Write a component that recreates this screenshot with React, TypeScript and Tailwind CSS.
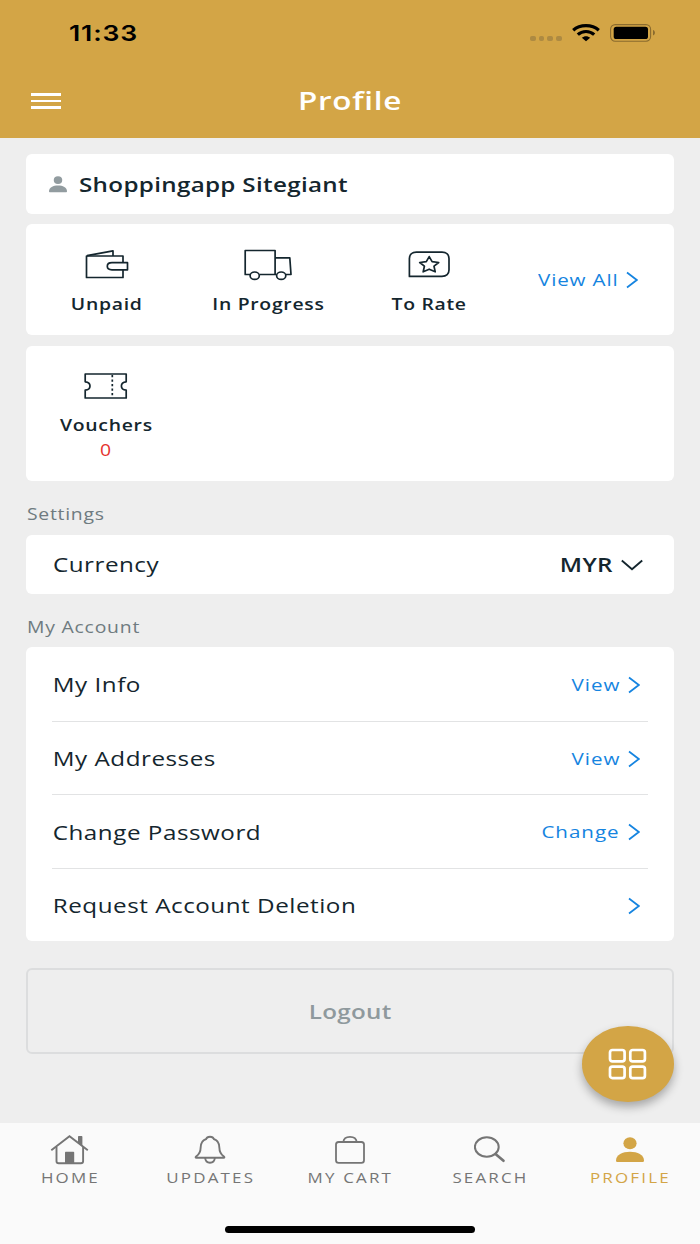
import type { ReactNode } from "react";

function Wide({ className = "", children }: { className?: string; children: ReactNode }) {
  return (
    <span className={`inline-block scale-x-[1.21] whitespace-nowrap ${className}`}>
      {children}
    </span>
  );
}

function WifiIcon() {
  return (
    <svg width="28" height="18" viewBox="0 0 28 18" fill="none" stroke="#000" strokeWidth="3.200">
      <path d="M1.200 6.200C8 .2 20 .2 26.800 6.200" />
      <path d="M5.800 10.700c4.600-4.300 11.800-4.300 16.400 0" />
      <path d="M14 17.300l-4.200-3.500c2.400-2.200 6-2.200 8.400 0z" fill="#000" stroke="none" />
    </svg>
  );
}

function BatteryIcon() {
  return (
    <svg width="45" height="18" viewBox="0 0 45 18">
      <rect x=".6" y=".6" width="40" height="16.600" rx="4.600" fill="none" stroke="#8a6b2e" strokeWidth="1.100" />
      <rect x="3.700" y="2.700" width="34.300" height="12.400" rx="2.600" fill="#000" />
      <path d="M43 6v5.400c1.100-.3 1.900-1.400 1.900-2.700S44.100 6.300 43 6z" fill="#8a6b2e" />
    </svg>
  );
}

function UserIcon({ className }: { className: string }) {
  return (
    <svg className={className} viewBox="0 0 28 26" preserveAspectRatio="none" fill="currentColor">
      <ellipse cx="14" cy="6.300" rx="6.600" ry="6" />
      <path d="M0 23.500C0 17.600 6.500 14.700 14 14.700s14 2.900 14 8.800c0 1-.7 1.500-1.700 1.500H1.700C.7 25 0 24.500 0 23.500z" />
    </svg>
  );
}

function WalletIcon() {
  return (
    <svg width="44" height="30" viewBox="0 0 44 30" fill="none" stroke="currentColor" strokeWidth="1.700" strokeLinejoin="round">
      <path d="M38 12.500V6H1.500v21.500H38V20" />
      <path d="M2 5.700L28 .9V6" />
      <path d="M42.500 12.700v7.100H27c-2.800 0-4.700-1.500-4.700-3.500s1.900-3.600 4.700-3.600z" />
    </svg>
  );
}

function TruckIcon() {
  return (
    <svg width="48" height="32" viewBox="0 0 48 32" fill="none" stroke="currentColor" strokeWidth="1.700" strokeLinejoin="round">
      <path d="M6 25.500H1.200V1.500h29.900v24H15.500M31.100 8.900h14.700L47 25.500h-5M31.100 25.500h1.300" />
      <ellipse cx="10.700" cy="26.700" rx="4.600" ry="3.700" />
      <ellipse cx="37.200" cy="26.700" rx="4.600" ry="3.700" />
    </svg>
  );
}

function RateIcon() {
  return (
    <svg width="42" height="28" viewBox="0 0 42 28" fill="none" stroke="currentColor" strokeWidth="1.700" strokeLinejoin="round">
      <path d="M1.400 25.400V7.500c0-3.700 2.600-6.300 7-6.300H34c4.400 0 7 2.600 7 6.300v11.600c0 3.700-2.600 6.300-7 6.300z" />
      <path d="M21.200 5.600l2.900 5 6.600.9-4.700 3.700 1.200 5.600-6-2.600-6 2.600 1.200-5.600-4.700-3.700 6.600-.9z" />
    </svg>
  );
}

function VoucherIcon() {
  return (
    <svg width="44" height="28" viewBox="0 0 44 28" fill="none" stroke="currentColor" strokeWidth="1.700" strokeLinejoin="round">
      <path d="M1.200 2h41v7.800c-3 .2-4.800 1.900-4.800 4.200s1.800 4 4.800 4.200V26h-41v-7.800c3-.2 4.800-1.900 4.800-4.200s-1.800-4-4.800-4.200z" />
      <path d="M28.300 3v22" strokeDasharray="2.300 2.200" />
    </svg>
  );
}

function ChevronRight() {
  return (
    <svg width="12" height="18" viewBox="0 0 12 18" fill="none" stroke="currentColor" strokeWidth="1.700">
      <path d="M1 1.500L10.800 9 1 16.500" />
    </svg>
  );
}

function ChevronDown() {
  return (
    <svg width="22" height="12" viewBox="0 0 22 12" fill="none" stroke="currentColor" strokeWidth="1.900">
      <path d="M.8 1.600L11 10.200 21.200 1.600" />
    </svg>
  );
}

function HomeIcon() {
  return (
    <svg width="40" height="32" viewBox="0 0 40 32" fill="none" stroke="currentColor" strokeWidth="1.900">
      <path d="M1.300 16.200L19.500 2.300l18.300 13.900" />
      <path d="M6.500 13v14.300c0 1.300.8 2 2.200 2h22.200c1.400 0 2.200-.7 2.200-2V13" />
      <path d="M28 3c0-.6.400-1 1.100-1h2.200c.7 0 1.100.4 1.100 1v9.300L28 8.800z" fill="currentColor" stroke="none" />
      <path d="M15 18.700c0-.7.400-1 1.100-1h7c.7 0 1.100.3 1.100 1v10.400H15z" fill="currentColor" stroke="none" />
    </svg>
  );
}

function BellIcon() {
  return (
    <svg width="32" height="32" viewBox="0 0 32 32" fill="none" stroke="currentColor" strokeWidth="1.900" strokeLinejoin="round">
      <path d="M16 2.700c-2 0-3.400.8-3.800 2.300-4.300 1.400-5.600 4.900-5.600 8.900 0 4.700-2 6.700-4.500 8.600-.8.700-.6 1.200.3 1.200h27.200c.9 0 1.100-.5.300-1.200-2.500-1.900-4.500-3.900-4.500-8.600 0-4-1.300-7.500-5.600-8.900-.4-1.500-1.800-2.300-3.800-2.300z" />
      <path d="M11.200 24c.2 3 2 4.700 4.800 4.700s4.600-1.700 4.800-4.700" />
    </svg>
  );
}

function CartIcon() {
  return (
    <svg width="32" height="32" viewBox="0 0 32 32" fill="none" stroke="currentColor" strokeWidth="1.800">
      <rect x="2" y="8" width="28" height="20.800" rx="2.600" />
      <path d="M9.300 8c.3-3.200 2.900-5.200 6.700-5.200s6.400 2 6.700 5.200" />
    </svg>
  );
}

function SearchIcon() {
  return (
    <svg width="32" height="32" viewBox="0 0 32 32" fill="none" stroke="currentColor" strokeWidth="2">
      <ellipse cx="12.800" cy="13" rx="11.900" ry="9.700" />
      <path d="M21.500 20l8 6.700" strokeWidth="2.700" strokeLinecap="round" />
    </svg>
  );
}

const orders = [
  { label: "Unpaid", icon: <WalletIcon /> },
  { label: "In Progress", icon: <TruckIcon /> },
  { label: "To Rate", icon: <RateIcon /> },
];

const account = [
  { label: "My Info", action: "View" },
  { label: "My Addresses", action: "View" },
  { label: "Change Password", action: "Change" },
  { label: "Request Account Deletion", action: "" },
];

const tabs = [
  { label: "HOME", icon: <HomeIcon /> },
  { label: "UPDATES", icon: <BellIcon /> },
  { label: "MY CART", icon: <CartIcon /> },
  { label: "SEARCH", icon: <SearchIcon /> },
  { label: "PROFILE", icon: <UserIcon className="h-[26px] w-7" />, active: true },
];

export default function App() {
  return (
    <div className="relative flex h-[1244px] w-[700px] flex-col overflow-hidden bg-[#eeeeee] font-['Open_Sans',sans-serif] text-[#14262e]">
      <header className="h-[138px] shrink-0 bg-[#d3a546]">
        <div className="flex h-[65px] items-center justify-between pr-[45px] pl-[69px] text-black">
          <Wide className="mt-0.5 origin-left font-['Inter',sans-serif] text-[22px] font-semibold tracking-[0.700px]">
            11:33
          </Wide>
          <div className="flex items-center">
            <div className="mt-[11px] mr-[10px] flex gap-[3px]">
              {[0, 1, 2, 3].map((dot) => (
                <span key={dot} className="h-[5px] w-[5.800px] rounded-[2px] bg-[#ad8a42]" />
              ))}
            </div>
            <WifiIcon />
            <span className="w-[10px]" />
            <BatteryIcon />
          </div>
        </div>
        <div className="grid h-[72px] grid-cols-[1fr_auto_1fr] items-center px-[31px]">
          <div className="flex w-[30px] flex-col gap-1">
            <span className="h-[2.700px] bg-white" />
            <span className="h-[2.700px] bg-white" />
            <span className="h-[2.700px] bg-white" />
          </div>
          <Wide className="-mt-0.5 text-[26px] font-semibold tracking-[0.600px] text-white">Profile</Wide>
        </div>
      </header>

      <main className="flex grow flex-col px-[26px] pt-4">
        <section className="flex h-[60px] items-center rounded-md bg-white pl-[23px]">
          <UserIcon className="h-[17px] w-[18px] text-[#929ca0]" />
          <Wide className="mt-px ml-3 origin-left text-[20px] font-semibold tracking-[0.260px]">
            Shoppingapp Sitegiant
          </Wide>
        </section>

        <section className="mt-[10px] flex h-[111px] rounded-md bg-white">
          {orders.map((item) => (
            <div key={item.label} className="flex w-[161.300px] flex-col items-center pt-[25px]">
              <div className="flex h-8 items-center">{item.icon}</div>
              <Wide className="mt-[11px] text-[16px] leading-6 font-semibold tracking-[0.600px]">{item.label}</Wide>
            </div>
          ))}
          <div className="flex grow items-center justify-end gap-2 pr-[36px] text-[#1584e0]">
            <Wide className="origin-right text-[17px] tracking-[0.700px]">View All</Wide>
            <ChevronRight />
          </div>
        </section>

        <section className="mt-[11px] h-[135px] rounded-md bg-white">
          <div className="flex w-[160px] flex-col items-center pt-6">
            <div className="flex h-8 items-center">
              <VoucherIcon />
            </div>
            <Wide className="mt-[11px] text-[16px] leading-6 font-semibold tracking-[0.600px]">Vouchers</Wide>
            <Wide className="text-[16px] leading-[26px] text-[#e5322d]">0</Wide>
          </div>
        </section>

        <h2 className="mt-[21px] h-[33px] pl-px text-[#6f7b80]">
          <Wide className="origin-left text-[16px] leading-6 tracking-[0.600px]">Settings</Wide>
        </h2>
        <section className="flex h-[59px] items-center justify-between rounded-md bg-white pt-px pr-[31px] pl-[26.500px]">
          <Wide className="origin-left text-[20px] tracking-[0.420px]">Currency</Wide>
          <div className="flex items-center gap-2">
            <Wide className="origin-right text-[20px] font-semibold tracking-[0.300px]">MYR</Wide>
            <ChevronDown />
          </div>
        </section>

        <h2 className="mt-[21px] h-8 pl-px text-[#6f7b80]">
          <Wide className="origin-left text-[16px] leading-6 tracking-[0.650px]">My Account</Wide>
        </h2>
        <section className="rounded-md bg-white px-[26px]">
          {account.map((row) => (
            <div
              key={row.label}
              className="flex h-[73.500px] items-center justify-between border-t border-[#e2e3e4] pt-[3px] pr-2 first:border-t-0"
            >
              <Wide className="origin-left pl-[0.600px] text-[20px] tracking-[0.440px]">{row.label}</Wide>
              <div className="mb-px flex items-center gap-2 text-[#1584e0]">
                <Wide className="-mt-px origin-right text-[17px] tracking-[0.800px]">{row.action}</Wide>
                <ChevronRight />
              </div>
            </div>
          ))}
        </section>

        <button className="mt-[27px] h-[85.500px] rounded-md border-2 border-[#dcddde] pt-[3px] text-[#8f999d]">
          <Wide className="text-[20px] font-semibold tracking-[0.250px]">Logout</Wide>
        </button>
      </main>

      <button className="absolute top-[1026px] left-[582px] flex h-[75.500px] w-[91.500px] items-center justify-center rounded-[50%] bg-[#d3a546] shadow-[0_5px_10px_rgba(0,0,0,0.3)]">
        <svg width="40" height="32" viewBox="0 0 40 32" fill="none" stroke="#fff" strokeWidth="2.700">
          <rect x="2" y="2" width="14.600" height="11.400" rx="2.400" />
          <rect x="22.300" y="2" width="14.600" height="11.400" rx="2.400" />
          <rect x="2" y="18.700" width="14.600" height="11.400" rx="2.400" />
          <rect x="22.300" y="18.700" width="14.600" height="11.400" rx="2.400" />
        </svg>
      </button>

      <nav className="h-[121.500px] shrink-0 bg-[#fafafa]">
        <div className="grid h-[103px] grid-cols-5">
          {tabs.map((tab) => (
            <div
              key={tab.label}
              className={`flex flex-col items-center pt-[11px] ${tab.active ? "text-[#d3a546]" : "text-[#757575]"}`}
            >
              <div className="flex h-8 items-center">{tab.icon}</div>
              <Wide className="mt-[2.500px] ml-px text-[14px] leading-5 font-medium tracking-[1.800px]">{tab.label}</Wide>
            </div>
          ))}
        </div>
        <div className="mx-auto h-[7px] w-[250px] rounded-full bg-black" />
      </nav>
    </div>
  );
}
